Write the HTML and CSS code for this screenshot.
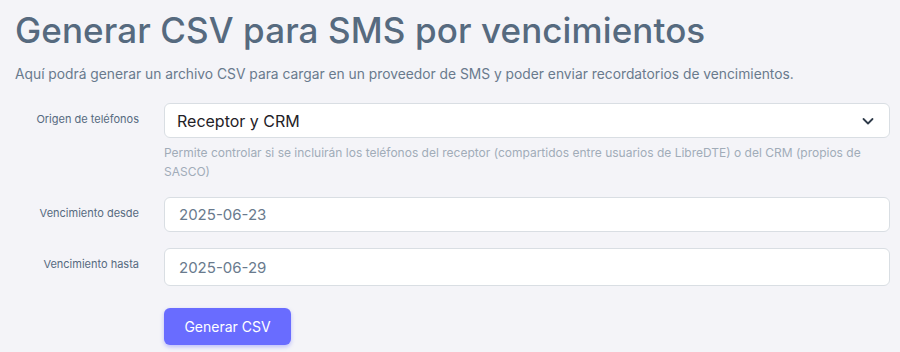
FILE: index.html
```html
<!DOCTYPE html>
<html lang="es">
<head>
<meta charset="utf-8">
<link rel="stylesheet" href="styles.css">
</head>
<body>
<main class="page">
  <h1 class="title">Generar CSV para SMS por vencimientos</h1>
  <p class="lead">Aquí podrá generar un archivo CSV para cargar en un proveedor de SMS y poder enviar recordatorios de vencimientos.</p>
  <form class="form">
    <div class="row">
      <label class="label">Origen de teléfonos</label>
      <div class="field">
        <div class="select">
          <span class="select-text">Receptor y CRM</span>
          <svg class="chev" width="14" height="14" viewBox="0 0 14 14"><path d="M2.5 5l4.5 4.5 4.5-4.5" fill="none" stroke="#2f3b4a" stroke-width="1.8" stroke-linecap="round" stroke-linejoin="round"/></svg>
        </div>
        <div class="help">Permite controlar si se incluirán los teléfonos del receptor (compartidos entre usuarios de LibreDTE) o del CRM (propios de SASCO)</div>
      </div>
    </div>
    <div class="row">
      <label class="label">Vencimiento desde</label>
      <div class="field"><div class="input">2025-06-23</div></div>
    </div>
    <div class="row">
      <label class="label">Vencimiento hasta</label>
      <div class="field"><div class="input tall">2025-06-29</div></div>
    </div>
    <div class="row">
      <span></span>
      <div class="field"><button type="button" class="btn">Generar CSV</button></div>
    </div>
  </form>
</main>
</body>
</html>
```
FILE: styles.css
```css
html, body { margin: 0; padding: 0; }
body {
  background: #f4f4f8;
  font-family: "Inter", "Liberation Sans", sans-serif;
  width: 900px;
  height: 352px;
  overflow: hidden;
}
.page { padding: 0 10px 0 15px; }
.title {
  margin: 0;
  padding-top: 9px;
  font-size: 35px;
  line-height: 42px;
  font-weight: 470;
  color: #566a7f;
  letter-spacing: 0.1px;
}
.lead {
  margin: 13px 0 0;
  font-size: 13.8px;
  line-height: 20px;
  color: #697a8d;
}
.form { margin-top: 19px; display: flex; flex-direction: column; gap: 16px; }
.row {
  display: grid;
  grid-template-columns: 124px 1fr;
  column-gap: 25px;
  align-items: start;
}
.label {
  text-align: right;
  font-size: 11px;
  line-height: 14px;
  color: #566a7f;
  padding-top: 9px;
}
.select, .input {
  box-sizing: border-box;
  background: #fff;
  border: 1px solid #d9dee3;
  border-radius: 6px;
  height: 35px;
  display: flex;
  align-items: center;
}
.select { padding: 0 14px 0 12px; justify-content: space-between; }
.select-text { font-size: 16px; color: #1f2227; }
.input { padding: 0 14px; font-size: 15px; color: #697a8d; }
.input.tall { height: 38px; }
.help {
  margin-top: 5px;
  font-size: 12px;
  line-height: 19px;
  color: #a1acb8;
}
.btn {
  margin-top: 6px;
  width: 127px;
  height: 37px;
  border: 0;
  border-radius: 6px;
  background: #696cff;
  color: #fff;
  font-family: inherit;
  font-size: 14px;
  box-shadow: 0 2px 4px rgba(105, 108, 255, 0.4);
}
```
